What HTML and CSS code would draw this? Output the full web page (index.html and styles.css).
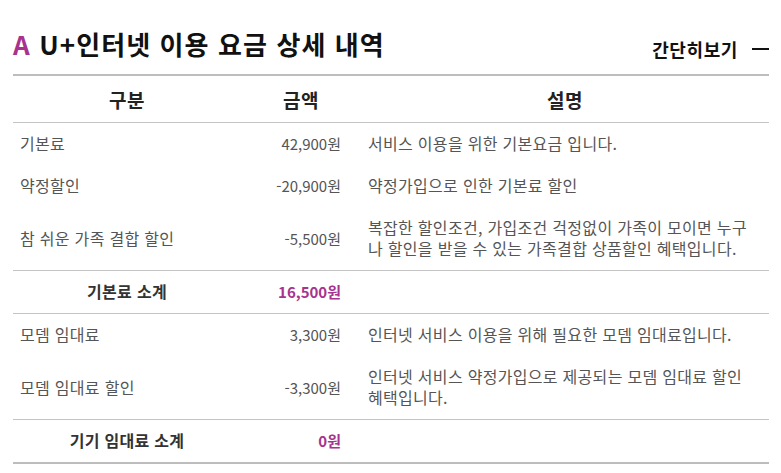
FILE: index.html
```html
<!DOCTYPE html>
<html lang="ko">
<head>
<meta charset="utf-8">
<link rel="stylesheet" href="styles.css">
</head>
<body>
<div class="wrap">
  <div class="head">
    <h2 class="title"><span class="mark">A</span> U+인터넷 이용 요금 상세 내역</h2>
    <div class="toggle">간단히보기 <span class="dash"></span></div>
  </div>
  <table class="bill">
    <colgroup>
      <col class="c1"><col class="c2"><col class="c3">
    </colgroup>
    <thead>
      <tr><th>구분</th><th>금액</th><th>설명</th></tr>
    </thead>
    <tbody>
      <tr><td>기본료</td><td class="amt">42,900원</td><td class="desc">서비스 이용을 위한 기본요금 입니다.</td></tr>
      <tr><td>약정할인</td><td class="amt">-20,900원</td><td class="desc">약정가입으로 인한 기본료 할인</td></tr>
      <tr><td>참 쉬운 가족 결합 할인</td><td class="amt">-5,500원</td><td class="desc">복잡한 할인조건, 가입조건 걱정없이 가족이 모이면 누구나 할인을 받을 수 있는 가족결합 상품할인 혜택입니다.</td></tr>
      <tr class="sub"><td class="sublabel">기본료 소계</td><td class="amt subamt">16,500원</td><td class="desc"></td></tr>
      <tr><td>모뎀 임대료</td><td class="amt">3,300원</td><td class="desc">인터넷 서비스 이용을 위해 필요한 모뎀 임대료입니다.</td></tr>
      <tr><td>모뎀 임대료 할인</td><td class="amt">-3,300원</td><td class="desc">인터넷 서비스 약정가입으로 제공되는 모뎀 임대료 할인 혜택입니다.</td></tr>
      <tr class="sub last"><td class="sublabel">기기 임대료 소계</td><td class="amt subamt">0원</td><td class="desc"></td></tr>
    </tbody>
  </table>
</div>
</body>
</html>
```
FILE: styles.css
```css
html, body {
  margin: 0;
  padding: 0;
  background: #fff;
}
body {
  font-family: "Noto Sans CJK KR", "Noto Sans", sans-serif;
  color: #555;
}
.wrap {
  padding: 29px 12px 0 13px;
}
.head {
  display: flex;
  justify-content: space-between;
  align-items: flex-end;
  margin-bottom: 15px;
}
.title {
  margin: 0;
  font-size: 26px;
  line-height: 30px;
  font-weight: 700;
  color: #111;
  letter-spacing: 1.1px;
}
.mark {
  color: #a8338e;
}
.toggle {
  display: flex;
  align-items: center;
  font-size: 18px;
  line-height: 20px;
  font-weight: 700;
  color: #111;
  letter-spacing: 0.6px;
}
.dash {
  display: inline-block;
  width: 17px;
  height: 2px;
  background: #111;
  margin-left: 14px;
}
.bill {
  width: 756px;
  border-collapse: collapse;
  table-layout: fixed;
  border-top: 2px solid #bdbdbd;
  border-bottom: 2px solid #bdbdbd;
}
.c1 { width: 228px; }
.c2 { width: 120px; }
.c3 { width: 408px; }
.bill th {
  height: 46px;
  padding: 0;
  font-size: 19px;
  font-weight: 700;
  color: #222;
  letter-spacing: 0.5px;
  border-bottom: 1px solid #c4c4c4;
  text-align: center;
}
.bill td {
  padding: 10px 7px 11px;
  font-size: 16px;
  line-height: 21px;
  letter-spacing: 0.3px;
  color: #555;
  vertical-align: middle;
}
.bill td.desc {
  padding-right: 18px;
}
.bill td.amt {
  text-align: right;
  padding-right: 20px;
  font-size: 15px;
  letter-spacing: 0;
}
.bill tr.sub td {
  border-top: 1px solid #c4c4c4;
  border-bottom: 1px solid #c4c4c4;
}
.bill tr.sub.last td {
  border-bottom: none;
}
.bill td.sublabel {
  text-align: center;
  font-weight: 700;
  color: #333;
}
.bill td.subamt {
  font-weight: 700;
  color: #a8338e;
}
```
